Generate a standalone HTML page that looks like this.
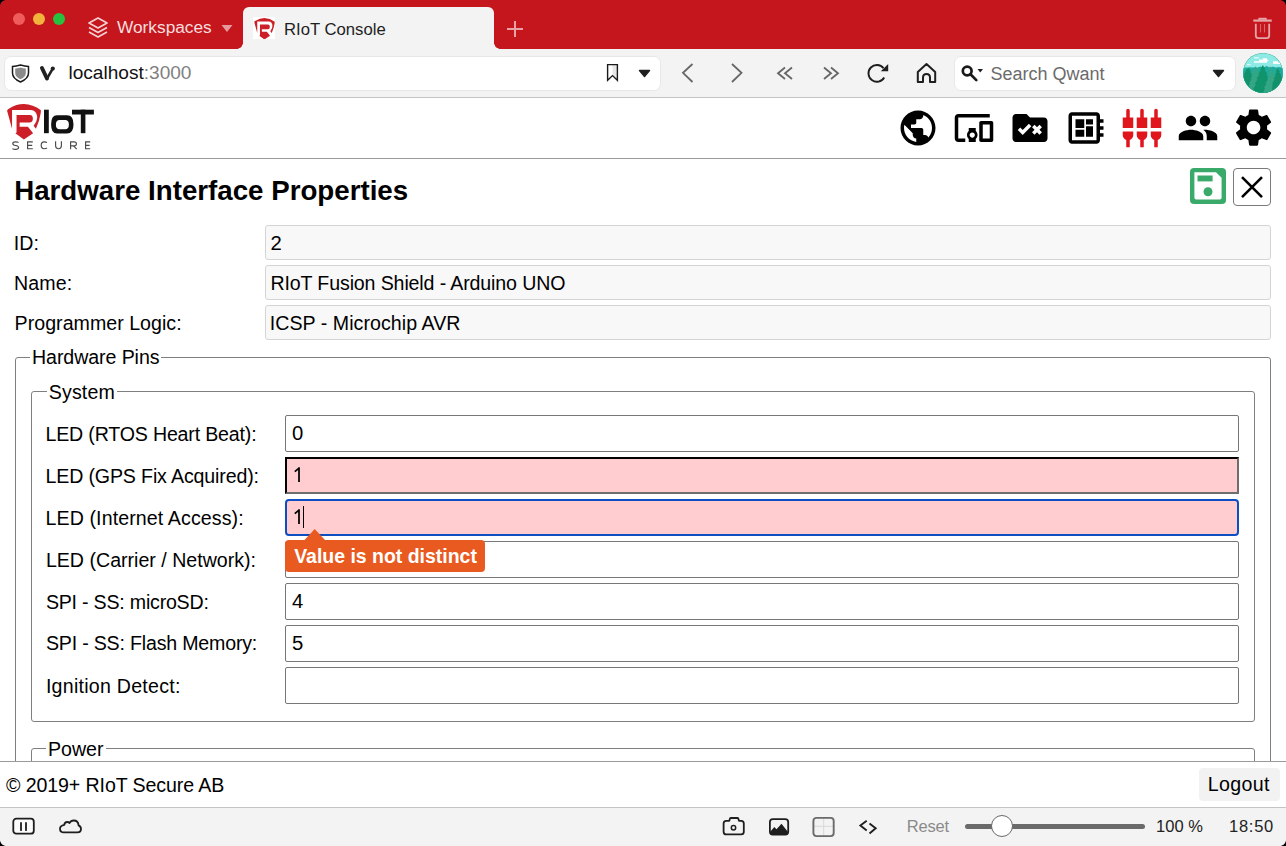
<!DOCTYPE html>
<html><head><meta charset="utf-8">
<style>
*{box-sizing:border-box}
html,body{margin:0;padding:0}
body{width:1286px;height:846px;overflow:hidden;position:relative;background:#fff;font-family:"Liberation Sans",sans-serif;color:#000}
.a{position:absolute}
#titlebar{left:0;top:0;width:1286px;height:49px;background:#c5161d}
#toolbar{left:0;top:49px;width:1286px;height:48px;background:#f3f3f3}
#tbline{left:0;top:97px;width:1286px;height:1px;background:#c4c4c4}
.dot{width:12px;height:12px;border-radius:50%}
#tab{left:243px;top:7px;width:251px;height:42px;background:#f3f3f3;border-radius:6px 6px 0 0}
.field{background:#fff;border-radius:7px;border:1px solid #e8e8e8}
#hdrline{left:0;top:158px;width:1286px;height:1px;background:#9a9a9a}
.lbl{font-size:19px;line-height:22px;white-space:nowrap}
.inp-ro{left:265px;width:1006px;height:35px;background:#f8f8f8;border:1px solid #d4d4d4;border-radius:3px}
.inp{left:285px;width:954px;height:37px;background:#fff;border:1px solid #777;border-radius:2px}
.val{font-size:19px;line-height:22px;white-space:nowrap}
.fs{border:1px solid #7f7f7f;border-radius:3px}
.legend{background:#fff;padding:0 2px;font-size:19px;line-height:22px;white-space:nowrap}
</style></head><body>

<!-- title bar -->
<div id="titlebar" class="a"></div>
<div class="a dot" style="left:13px;top:13px;background:#f05c5c"></div>
<div class="a dot" style="left:33px;top:13px;background:#f2b33d"></div>
<div class="a dot" style="left:53px;top:13px;background:#27c13f"></div>
<div id="tab" class="a"></div>

<!-- toolbar -->
<div id="toolbar" class="a"></div>
<div id="tbline" class="a"></div>
<div class="a field" style="left:3.5px;top:55.5px;width:657.5px;height:35px"></div>
<div class="a field" style="left:953.5px;top:55.5px;width:282px;height:35px"></div>
<div class="a" style="left:1243px;top:53px;width:40px;height:40px;border-radius:50%;background:#1f9a78"></div>

<!-- app header -->
<div id="hdrline" class="a"></div>

<!-- heading -->
<div class="a" style="left:1190px;top:168px;width:36px;height:36px;background:#3aaa6b;border-radius:4px"></div>
<div class="a" style="left:1233px;top:168px;width:38px;height:38px;border:1.5px solid #7a7a7a;border-radius:4px"></div>

<!-- ro fields -->
<div class="a inp-ro" style="top:225px"></div>
<div class="a inp-ro" style="top:265px"></div>
<div class="a inp-ro" style="top:305px"></div>

<!-- fieldsets -->
<div class="a fs" style="left:15px;top:357px;width:1256px;height:500px"></div>
<div class="a fs" style="left:31px;top:391px;width:1224px;height:331px"></div>
<div class="a fs" style="left:31px;top:748px;width:1224px;height:100px"></div>
<div class="a inp" style="top:415px;"></div>
<div class="a inp" style="top:457px;background:#ffcdd0;border-width:2px;border-style:solid;border-color:#000 #6e6e6e #6e6e6e #000;border-radius:0"></div>
<div class="a inp" style="top:499px;background:#ffcdd0;border:2px solid #0d4ec3;border-radius:4px"></div>
<div class="a inp" style="top:541px;"></div>
<div class="a inp" style="top:583px;"></div>
<div class="a inp" style="top:625px;"></div>
<div class="a inp" style="top:667px;"></div>
<div class="a" style="left:303px;top:506px;width:1px;height:22px;background:#000"></div>
<svg class="a" style="left:290px;top:462px" width="14" height="66" viewBox="0 0 14 66" fill="none" stroke="#000" stroke-width="1.75">
<path d="M9 5.3 V19.9 M9.3 5.8 L4.8 9.6" stroke-linecap="butt"/>
<path d="M9 47.3 V61.9 M9.3 47.8 L4.8 51.6" stroke-linecap="butt"/></svg>
<!-- tooltip -->
<div class="a" style="left:285px;top:539.5px;width:200px;height:32px;background:#e95a20;border-radius:4px"></div>
<svg class="a" style="left:304px;top:528px" width="22" height="13" viewBox="0 0 22 13"><path d="M0.5 12 L10.7 1 L21 12 Z" fill="#e95a20"/></svg>

<!-- footer -->
<div class="a" style="left:0;top:761px;width:1286px;height:46px;background:#fff;border-top:1px solid #9a9a9a"></div>
<div class="a" style="left:1199px;top:768px;width:81px;height:33px;background:#f2f2f2;border-radius:4px"></div>

<!-- status bar -->
<div class="a" style="left:0;top:807px;width:1286px;height:39px;background:#f3f3f3;border-top:1px solid #c4c4c4"></div>
<div class="a" style="left:965px;top:824px;width:180px;height:5px;background:#6a6a6a;border-radius:3px"></div>
<div class="a" style="left:991px;top:815px;width:22px;height:22px;background:#fff;border:1px solid #6a6a6a;border-radius:50%"></div>

<!-- ===== browser chrome icons ===== -->
<div class="a" style="left:0;top:0;width:6px;height:6px;background:radial-gradient(circle at 6px 6px, transparent 5.5px, #000 6.2px)"></div>
<div class="a" style="left:1280px;top:0;width:6px;height:6px;background:radial-gradient(circle at 0 6px, transparent 5.5px, #000 6.2px)"></div>
<div class="a" style="left:0;top:840px;width:6px;height:6px;background:radial-gradient(circle at 6px 0, transparent 5.5px, #000 6.2px)"></div>
<div class="a" style="left:1280px;top:840px;width:6px;height:6px;background:radial-gradient(circle at 0 0, transparent 5.5px, #000 6.2px)"></div>
<!-- workspaces layers -->
<svg class="a" style="left:86px;top:16px" width="24" height="24" viewBox="0 0 24 24" fill="none" stroke="#f3d0d1" stroke-width="1.7" stroke-linejoin="round">
<path d="M12 2 L21 7 L12 12 L3 7 Z"/><path d="M3 11.5 L12 16.5 L21 11.5"/><path d="M3 16 L12 21 L21 16"/></svg>
<svg class="a" style="left:221px;top:24px" width="12" height="9" viewBox="0 0 12 9"><path d="M0.5 1 L11.5 1 L6 8 Z" fill="#e79a9d"/></svg>
<!-- tab inverse corners -->
<div class="a" style="left:237px;top:43px;width:6px;height:6px;background:radial-gradient(circle at 0 0, #c5161d 5.5px, #f3f3f3 6px)"></div>
<div class="a" style="left:494px;top:43px;width:6px;height:6px;background:radial-gradient(circle at 6px 0, #c5161d 5.5px, #f3f3f3 6px)"></div>
<!-- favicon -->
<div class="a" style="left:253px;top:17px;width:22px;height:22px;background:#fff"></div>
<svg class="a" style="left:253.5px;top:17.5px" width="21" height="21.5" viewBox="55 65 715 750"><g fill="#cc1f27">
<path d="M160 590 L55 205 Q60 180 100 160 Q250 65 410 65 Q600 70 770 195 L765 260 Q740 420 665 590 L615 525 Q700 420 690 320 Q670 200 560 190 L160 190 Z"/>
<path d="M255 295 L540 295 Q600 300 600 375 Q600 450 530 455 L320 455 L320 545 L495 545 L605 685 L410 815 L230 685 L255 665 Z"/></g></svg>
<!-- plus -->
<svg class="a" style="left:506px;top:20px" width="18" height="18" viewBox="0 0 18 18" stroke="#e8a3a6" stroke-width="2"><path d="M9 1 V17 M1 9 H17"/></svg>
<!-- trash -->
<svg class="a" style="left:1252px;top:17px" width="21" height="23" viewBox="0 0 21 23" fill="none" stroke="#e6a5a8">
<path d="M1.3 3.6 H19.7" stroke-width="2.2"/><path d="M6.5 2.6 L7.3 1.6 H13.7 L14.5 2.6" stroke-width="1.6" fill="#e6a5a8"/><path d="M3.8 6.8 V18.6 Q3.8 21.2 6.4 21.2 H14.6 Q17.2 21.2 17.2 18.6 V6.8" stroke-width="1.8"/><path d="M8.5 7 V15.5 M12.5 7 V15.5" stroke-width="1.1" opacity="0.55"/></svg>

<!-- shield -->
<svg class="a" style="left:11px;top:64px" width="19" height="19" viewBox="0 0 19 19">
<path d="M9.5 1 Q5 2.2 1.5 2.5 V9 Q1.5 14.5 9.5 18 Q17.5 14.5 17.5 9 V2.5 Q14 2.2 9.5 1 Z" fill="#fff" stroke="#1a1a1a" stroke-width="1.5"/>
<path d="M9.5 3.5 Q6.5 4.3 4.2 4.6 V9 Q4.2 13 9.5 15.3 Q14.8 13 14.8 9 V4.6 Q12.5 4.3 9.5 3.5 Z" fill="#8a8a8a"/></svg>
<!-- vivaldi V -->
<svg class="a" style="left:39px;top:65px" width="17" height="17" viewBox="0 0 17 17">
<path d="M2.9 2.9 L8 13.6" fill="none" stroke="#222" stroke-width="3.8" stroke-linecap="round"/>
<path d="M8 13.6 L13.6 3.9" fill="none" stroke="#222" stroke-width="2.6" stroke-linecap="round"/>
<circle cx="13.8" cy="3.6" r="2.1" fill="#222"/></svg>
<!-- bookmark -->
<svg class="a" style="left:606px;top:63px" width="13" height="19" viewBox="0 0 13 19">
<path d="M6.5 1.5 H11.4 V16.5 L6.5 12 Z" fill="#e6e6e6"/>
<path d="M1.6 1.6 H11.4 V17.3 L6.5 12.6 L1.6 17.3 Z" fill="none" stroke="#1a1a1a" stroke-width="1.4" stroke-linejoin="miter"/></svg>
<svg class="a" style="left:638px;top:69px" width="13" height="9" viewBox="0 0 13 9"><path d="M1.5 1.5 L11.5 1.5 L6.5 7.6 Z" fill="#1e1e1e" stroke="#1e1e1e" stroke-width="1.4" stroke-linejoin="round"/></svg>
<!-- nav -->
<svg class="a" style="left:676px;top:58px" width="170" height="30" viewBox="0 0 170 30" fill="none" stroke="#666" stroke-width="1.8" stroke-linecap="butt">
<path d="M16.5 6 L7 14.8 L16.5 24"/>
<path d="M56 6 L65.5 14.8 L56 24"/>
<path d="M109 9.5 L102 15.2 L109 21 M116 9.5 L109 15.2 L116 21"/>
<path d="M148 9.5 L155 15.2 L148 21 M155 9.5 L162 15.2 L155 21"/></svg>
<!-- reload -->
<svg class="a" style="left:866px;top:62px" width="24" height="22" viewBox="0 0 24 22">
<path d="M17.5 6.2 A8.4 8.4 0 1 0 18.2 15.5" fill="none" stroke="#1e1e1e" stroke-width="1.9"/>
<path d="M14.8 9.3 L22.2 9.3 L22.2 2 Z" fill="#1e1e1e"/></svg>
<!-- home -->
<svg class="a" style="left:915px;top:62px" width="23" height="22" viewBox="0 0 23 22">
<path d="M2.8 20 V10 L11.5 2 L20.2 10 V20 H15 V15.5 Q15 12 11.5 12 Q8 12 8 15.5 V20 Z" fill="none" stroke="#1e1e1e" stroke-width="2" stroke-linejoin="round"/></svg>
<!-- search -->
<svg class="a" style="left:960px;top:62px" width="26" height="22" viewBox="0 0 26 22">
<circle cx="7.2" cy="9" r="4.4" fill="none" stroke="#1a1a1a" stroke-width="2.7"/>
<path d="M10.5 12.3 L16.3 18.1" stroke="#1a1a1a" stroke-width="2.7" stroke-linecap="round"/>
<path d="M17.5 7 L23 7 L20.25 10.5 Z" fill="#1e1e1e"/></svg>
<svg class="a" style="left:1212px;top:69px" width="13" height="9" viewBox="0 0 13 9"><path d="M1.5 1.5 L11.5 1.5 L6.5 7.6 Z" fill="#1e1e1e" stroke="#1e1e1e" stroke-width="1.4" stroke-linejoin="round"/></svg>
<!-- avatar -->
<svg class="a" style="left:1242.5px;top:53px" width="40" height="40" viewBox="0 0 40 40">
<defs><clipPath id="av"><circle cx="20" cy="20" r="19.8"/></clipPath></defs>
<g clip-path="url(#av)">
<rect width="40" height="40" fill="#8deae4"/>
<path d="M11 8.2 h5 v-1.6 h4 v-1.4 h4 v1.6 h1.3 v1.4 h-1.3 v1.5 h-13 Z" fill="#fff"/>
<path d="M11 4 h4.8 v1.4 h-4.8 Z" fill="#d8f8f6"/>
<path d="M30 8.3 h5 v1.3 h2 v1.4 h-7 Z" fill="#fff"/>
<path d="M4 11 h3.5 v1.3 h-3.5 Z" fill="#d8f8f6"/>
<rect y="14.5" width="40" height="26" fill="#1fb0a3"/>
<path d="M0 40 V17 L2 15.5 L4 16.5 L7 14 L9 16 L11 14.5 L14 15.5 L17 13.5 L20 14.5 L24 13 L27 15 L30 13.5 L33 15 L36 14 L40 15.5 V40 Z" fill="#1eab9e"/>
<path d="M5.3 14.8 L8 18.5 L7 18.7 L9.2 22 L8 22.2 L10.5 26 L9.3 26.2 L11.5 30 L11 40 L0 40 L0 24 L1.5 22 L0.5 21.8 L2.7 18.5 L2 18.3 Z" fill="#12916a"/>
<path d="M12.5 13.3 L15.2 17.5 L14.2 17.7 L16.8 21.5 L15.6 21.8 L18.3 26 L17 26.2 L19.8 30.5 L18.5 30.8 L21 35 L21 40 L4 40 L5.5 35 L4.5 34.8 L7 30.5 L6 30.3 L8.5 26.2 L7.6 26 L10 21.8 L9.2 21.5 L11 17.7 L10.2 17.5 Z" fill="#35a685"/>
<path d="M19.8 12 L22.5 16.5 L21.5 16.8 L24.5 21 L23.3 21.3 L26.2 26 L25 26.3 L28 31 L26.5 31.3 L29.5 36 L28.5 36.3 L30.5 40 L9 40 L11 36.3 L10 36 L13 31.3 L11.6 31 L14.6 26.3 L13.4 26 L16.3 21.3 L15.2 21 L18 16.8 L17.1 16.5 Z" fill="#10946b"/>
<path d="M27 13 L29.8 17.2 L28.8 17.5 L31.5 21.5 L30.4 21.8 L33 26 L31.8 26.3 L34.5 30.5 L33.3 30.8 L36 35 L36 40 L20 40 L22 35 L21 34.8 L23.5 30.5 L22.4 30.3 L25 26.2 L24 26 L26.4 21.8 L25.5 21.5 L27.5 17.5 L26.5 17.2 Z" fill="#35a685"/>
<path d="M34.5 15.1 L37 18.7 L36 19 L38.5 22.5 L37.5 22.8 L40 26.5 V40 L29 40 L29.5 30 L31.6 26.2 L30.6 26 L32.8 22.2 L31.8 22 L33.8 18.7 L32.8 18.5 Z" fill="#12916a"/>
</g></svg>

<!-- ===== app header ===== -->
<svg class="a" style="left:6.5px;top:104px" width="34" height="35.5" viewBox="55 65 715 750"><g fill="#cc1f27">
<path d="M160 590 L55 205 Q60 180 100 160 Q250 65 410 65 Q600 70 770 195 L765 260 Q740 420 665 590 L615 525 Q700 420 690 320 Q670 200 560 190 L160 190 Z"/>
<path d="M255 295 L540 295 Q600 300 600 375 Q600 450 530 455 L320 455 L320 545 L495 545 L605 685 L410 815 L230 685 L255 665 Z"/></g></svg>
<svg class="a" style="left:40px;top:104px" width="60" height="48" viewBox="0 0 60 48">
<g fill="#111">
<rect x="4" y="5.7" width="4.8" height="23.5"/>
<path fill-rule="evenodd" d="M17 11.3 H27 Q33.5 11.3 33.5 20.4 Q33.5 29.5 27 29.5 H17 Q11.1 29.5 11.1 20.4 Q11.1 11.3 17 11.3 Z M19.5 15.9 H25.2 Q28.9 15.9 28.9 20.4 Q28.9 25.2 25.2 25.2 H19.5 Q15.9 25.2 15.9 20.4 Q15.9 15.9 19.5 15.9 Z"/>
<rect x="32" y="5.7" width="21.9" height="4.8"/>
<rect x="40.8" y="5.7" width="4.6" height="23.5"/>
</g>
</svg>

<svg class="a" style="left:0px;top:103.6px" width="100" height="48" viewBox="-40 0 100 48"><g fill="none" stroke="#4a4a4a" stroke-width="1.15">
<path d="M-21.4 38.5 Q-22 37.8 -24.6 37.8 Q-27.2 37.8 -27.2 39.6 Q-27.2 41.2 -24.5 41.5 Q-21.4 41.9 -21.4 43.6 Q-21.4 45.4 -24.4 45.4 Q-26.6 45.4 -27.6 44.6"/>
<path d="M-7.2 37.9 H-12.4 V44.7 H-7.2 M-12.4 41.3 H-7.8"/>
<path d="M7 38.6 Q6 37.9 4.2 37.9 Q1.2 37.9 1.2 41.3 Q1.2 44.7 4.2 44.7 Q6 44.7 7 44"/>
<path d="M15.6 37.2 V41.8 Q15.6 44.7 18.6 44.7 Q21.4 44.7 21.4 41.8 V37.2"/>
<path d="M30.6 45.2 V37.9 H34.2 Q36.4 37.9 36.4 39.9 Q36.4 41.8 34.2 41.8 H30.6 M33.6 41.8 L36.7 45.2"/>
<path d="M50.2 37.9 H45.6 V44.7 H50.2 M45.6 41.3 H49.6"/>
</g></svg>
<!-- header icons (material, 42px) -->
<svg class="a" style="left:897px;top:107px" width="42" height="42" viewBox="0 0 24 24"><path fill="#000" d="M12 2C6.48 2 2 6.48 2 12s4.48 10 10 10 10-4.48 10-10S17.52 2 12 2zm-1 17.93c-3.95-.49-7-3.85-7-7.930 0-.62.08-1.21.21-1.79L9 15v1c0 1.1.9 2 2 2v1.93zm6.9-2.54c-.26-.81-1-1.39-1.9-1.39h-1v-3c0-.55-.45-1-1-1H8v-2h2c.55 0 1-.45 1-1V7h2c1.1 0 2-.9 2-2v-.41c2.930 1.19 5 4.06 5 7.41 0 2.08-.8 3.97-2.1 5.39z"/></svg>
<svg class="a" style="left:953px;top:107px" width="42" height="42" viewBox="0 0 24 24"><path fill="#000" d="M3 6h18V4H3c-1.1 0-2 .9-2 2v12c0 1.1.9 2 2 2h4v-2H3V6zm10 6H9v1.78c-.61.55-1 1.33-1 2.22s.39 1.67 1 2.22V20h4v-1.78c.61-.55 1-1.34 1-2.22s-.39-1.670-1-2.22V12zm-2 5.5c-.83 0-1.5-.67-1.5-1.5s.67-1.5 1.5-1.5 1.5.67 1.5 1.5-.67 1.5-1.5 1.5zM22 8h-6c-.5 0-1 .5-1 1v10c0 .5.5 1 1 1h6c.5 0 1-.5 1-1V9c0-.5-.5-1-1-1zm-1 10h-4v-8h4v8z"/></svg>
<svg class="a" style="left:1009px;top:107px" width="42" height="42" viewBox="0 0 24 24"><path fill="#000" d="M20 6h-8l-2-2H4c-1.1 0-1.99.9-1.99 2L2 18c0 1.1.9 2 2 2h16c1.1 0 2-.9 2-2V8c0-1.1-.9-2-2-2zM7.83 16L5 13.17l1.41-1.41 1.41 1.41 3.54-3.54 1.41 1.41L7.83 16zm9.58-3l1.41 1.41-1.41 1.41L16 14.41l-1.41 1.42-1.41-1.41L14.59 13l-1.41-1.41 1.41-1.41L16 11.590l1.41-1.41 1.41 1.41L17.41 13z"/></svg>
<svg class="a" style="left:1065px;top:107px" width="42" height="42" viewBox="0 0 24 24"><path fill="#000" d="M22 9V7h-2V5c0-1.1-.9-2-2-2H4c-1.1 0-2 .9-2 2v14c0 1.1.9 2 2 2h14c1.1 0 2-.9 2-2v-2h2v-2h-2v-2h2v-2h-2V9h2zm-4 10H4V5h14v14zM6 13h5v4H6zm6-6h4v3h-4zM6 7h5v5H6zm6 4h4v6h-4z"/></svg>
<svg class="a" style="left:1121px;top:107px" width="42" height="42" viewBox="0 0 24 24"><path fill="#e0161c" d="M5 2c0-.55-.45-1-1-1s-1 .45-1 1v4H1v6h6V6H5V2zm4 14c0 1.3.84 2.4 2 2.82V23h2v-4.18c1.16-.41 2-1.51 2-2.82v-2H9v2zm-8 0c0 1.3.84 2.4 2 2.82V23h2v-4.18C6.16 18.4 7 17.3 7 16v-2H1v2zM21 6V2c0-.55-.45-1-1-1s-1 .45-1 1v4h-2v6h6V6h-2zm-8-4c0-.55-.45-1-1-1s-1 .45-1 1v4H9v6h6V6h-2V2zm4 14c0 1.3.84 2.4 2 2.82V23h2v-4.18c1.16-.41 2-1.51 2-2.82v-2h-6v2z"/></svg>
<svg class="a" style="left:1177px;top:107px" width="42" height="42" viewBox="0 0 24 24"><path fill="#000" d="M16 11c1.66 0 2.99-1.34 2.99-3S17.66 5 16 5c-1.66 0-3 1.34-3 3s1.34 3 3 3zm-8 0c1.66 0 2.99-1.34 2.99-3S9.66 5 8 5C6.34 5 5 6.34 5 8s1.34 3 3 3zm0 2c-2.33 0-7 1.17-7 3.5V19h14v-2.5c0-2.33-4.67-3.5-7-3.5zm8 0c-.29 0-.62.02-.97.05 1.16.84 1.97 1.97 1.97 3.45V19h6v-2.5c0-2.33-4.67-3.5-7-3.5z"/></svg>
<svg class="a" style="left:1231.2px;top:105.2px" width="45.15" height="45.15" viewBox="0 0 24 24"><path fill="#000" d="M19.14 12.94c.04-.3.06-.61.06-.94 0-.32-.02-.64-.07-.94l2.03-1.58c.18-.14.23-.41.12-.61l-1.92-3.32c-.12-.22-.37-.29-.59-.22l-2.39.96c-.5-.38-1.03-.7-1.62-.94l-.36-2.54c-.04-.24-.24-.41-.48-.41h-3.84c-.24 0-.43.17-.47.41l-.36 2.54c-.59.24-1.13.57-1.62.94l-2.39-.96c-.22-.08-.47 0-.59.22L2.74 8.87c-.12.21-.08.47.12.61l2.03 1.58c-.05.3-.09.63-.09.94s.02.64.07.94l-2.03 1.58c-.18.14-.23.41-.12.61l1.92 3.32c.12.22.37.29.59.22l2.39-.96c.5.38 1.03.7 1.62.94l.36 2.54c.05.24.24.41.48.41h3.84c.24 0 .44-.17.47-.41l.36-2.54c.59-.24 1.13-.56 1.62-.94l2.39.96c.22.08.47 0 .59-.22l1.92-3.32c.12-.22.07-.47-.12-.61l-2.01-1.58zM12 15.6c-1.98 0-3.6-1.62-3.6-3.6s1.62-3.6 3.6-3.6 3.6 1.62 3.6 3.6-1.62 3.6-3.6 3.6z"/></svg>

<!-- save / close -->
<svg class="a" style="left:1190px;top:168px" width="36" height="36" viewBox="0 0 36 36">
<path d="M4.4 4.2 H26 L31.6 9.8 V29.6 Q31.6 31.6 29.6 31.6 H6.4 Q4.4 31.6 4.4 29.6 Z" fill="#fff"/>
<rect x="7.5" y="7.5" width="15.1" height="5.9" fill="#3aaa6b"/>
<circle cx="18" cy="23.7" r="4.5" fill="#3aaa6b"/></svg>
<svg class="a" style="left:1233px;top:168px" width="38" height="38" viewBox="0 0 38 38">
<path d="M9 9.2 L29 29.2 M29 9.2 L9 29.2" stroke="#000" stroke-width="2.6"/></svg>

<!-- status bar icons -->
<svg class="a" style="left:11px;top:816px" width="26" height="20" viewBox="0 0 26 20" fill="none" stroke="#1e1e1e">
<rect x="2.3" y="2.7" width="20.5" height="15" rx="3" stroke-width="1.8" fill="#fcfcfc"/>
<path d="M10 7 V14.2 M15 7 V14.2" stroke-width="1.8" stroke-linecap="round"/></svg>
<svg class="a" style="left:58px;top:818px" width="25" height="17" viewBox="0 0 25 17">
<path d="M5 14.3 H19.5 Q23 14.3 23 11 Q23 8.5 20.6 7.4 Q20.2 2.5 15.8 2.5 Q12.8 2.5 11.4 5 Q10.5 4 9.2 4 Q6.6 4 6.3 6.8 Q2 7.6 2 10.6 Q2 14.3 5 14.3 Z" fill="none" stroke="#1e1e1e" stroke-width="1.8" stroke-linejoin="round"/></svg>
<svg class="a" style="left:721px;top:815px" width="26" height="22" viewBox="0 0 26 22" fill="none" stroke="#1e1e1e" stroke-width="1.8">
<path d="M5.2 5.8 H8.3 L9 3.6 Q9.2 3 10 3 H16.3 Q17.1 3 17.3 3.6 L18 5.8 H20.2 Q22.8 5.8 22.8 8.4 V16.8 Q22.8 19.4 20.2 19.4 H5.2 Q2.6 19.4 2.6 16.8 V8.4 Q2.6 5.8 5.2 5.8 Z" stroke-linejoin="round"/>
<circle cx="12.5" cy="12.7" r="2.2" stroke-width="1.5"/></svg>
<svg class="a" style="left:767px;top:816px" width="24" height="21" viewBox="0 0 24 21">
<rect x="2.9" y="3.1" width="18.3" height="15.5" rx="3" fill="none" stroke="#1e1e1e" stroke-width="1.8"/>
<path d="M3 16 L7.3 11 L9.5 13.2 L14.5 7.8 L21 16 V17 Q21 18.6 19.4 18.6 H4.6 Q3 18.6 3 17 Z" fill="#1e1e1e"/></svg>
<svg class="a" style="left:811px;top:815px" width="25" height="23" viewBox="0 0 25 23">
<path d="M12.7 3 V21 M2.5 11.3 H22.6" stroke="#d8d8d8" stroke-width="1"/>
<rect x="2.4" y="2.9" width="20.3" height="18.2" rx="3" fill="none" stroke="#6a6a6a" stroke-width="1.9"/></svg>
<svg class="a" style="left:857px;top:818px" width="22" height="18" viewBox="0 0 22 18" fill="none" stroke="#1e1e1e" stroke-width="1.9">
<path d="M9.7 2.7 L3.4 7.4 L9.7 12.4 M12.5 5.5 L18.7 10.3 L12.5 15.5"/></svg>

<div class="a" id="ws" style="left:117.00px;top:16.80px;font-size:17.30px;line-height:20px;font-weight:normal;color:#f6dede;white-space:nowrap">Workspaces</div>
<div class="a" id="tabtxt" style="left:284.00px;top:20.00px;font-size:16.71px;line-height:20px;font-weight:normal;color:#1e1e1e;white-space:nowrap">RIoT Console</div>
<div class="a" id="url" style="left:68.50px;top:62.00px;font-size:19.07px;line-height:22px;font-weight:normal;color:#111;white-space:nowrap">localhost<span style="color:#808080">:3000</span></div>
<div class="a" id="search" style="left:990.40px;top:63.00px;font-size:18.00px;line-height:22px;font-weight:normal;color:#6b6b6b;white-space:nowrap">Search Qwant</div>
<div class="a" id="h1" style="left:14.20px;top:175.00px;font-size:27.70px;line-height:32px;font-weight:bold;color:#000;white-space:nowrap">Hardware Interface Properties</div>
<div class="a" id="l_id" style="left:13.80px;top:231.90px;font-size:19.60px;line-height:22px;font-weight:normal;color:#000;white-space:nowrap;letter-spacing:0.100px">ID:</div>
<div class="a" id="l_name" style="left:14.00px;top:271.90px;font-size:19.60px;line-height:22px;font-weight:normal;color:#000;white-space:nowrap;letter-spacing:0.150px">Name:</div>
<div class="a" id="l_prog" style="left:14.60px;top:311.50px;font-size:19.60px;line-height:22px;font-weight:normal;color:#000;white-space:nowrap;letter-spacing:0.024px">Programmer Logic:</div>
<div class="a" id="v_id" style="left:270.50px;top:232.30px;font-size:20.30px;line-height:22px;font-weight:normal;color:#000;white-space:nowrap">2</div>
<div class="a" id="v_name" style="left:270.50px;top:272.40px;font-size:19.60px;line-height:22px;font-weight:normal;color:#000;white-space:nowrap;letter-spacing:-0.135px">RIoT Fusion Shield - Arduino UNO</div>
<div class="a" id="v_prog" style="left:269.70px;top:312.40px;font-size:19.60px;line-height:22px;font-weight:normal;color:#000;white-space:nowrap;letter-spacing:0.052px">ICSP - Microchip AVR</div>
<div class="a" id="lg_hw" style="left:30.00px;top:346.20px;font-size:19.60px;line-height:22px;font-weight:normal;color:#000;white-space:nowrap;letter-spacing:-0.083px;background:#fff;padding:0 2px">Hardware Pins</div>
<div class="a" id="lg_sys" style="left:46.80px;top:381.00px;font-size:19.60px;line-height:22px;font-weight:normal;color:#000;white-space:nowrap;letter-spacing:0.120px;background:#fff;padding:0 2px">System</div>
<div class="a" id="lg_pow" style="left:46.00px;top:738.10px;font-size:19.60px;line-height:22px;font-weight:normal;color:#000;white-space:nowrap;background:#fff;padding:0 2px">Power</div>
<div class="a" id="r0" style="left:45.50px;top:422.90px;font-size:19.60px;line-height:22px;font-weight:normal;color:#000;white-space:nowrap;letter-spacing:-0.181px">LED (RTOS Heart Beat):</div>
<div class="a" id="r1" style="left:45.50px;top:464.90px;font-size:19.60px;line-height:22px;font-weight:normal;color:#000;white-space:nowrap;letter-spacing:-0.146px">LED (GPS Fix Acquired):</div>
<div class="a" id="r2" style="left:45.50px;top:506.90px;font-size:19.60px;line-height:22px;font-weight:normal;color:#000;white-space:nowrap;letter-spacing:0.104px">LED (Internet Access):</div>
<div class="a" id="r3" style="left:45.90px;top:548.70px;font-size:19.60px;line-height:22px;font-weight:normal;color:#000;white-space:nowrap">LED (Carrier / Network):</div>
<div class="a" id="r4" style="left:45.90px;top:590.70px;font-size:19.60px;line-height:22px;font-weight:normal;color:#000;white-space:nowrap;letter-spacing:-0.212px">SPI - SS: microSD:</div>
<div class="a" id="r5" style="left:45.90px;top:632.10px;font-size:19.60px;line-height:22px;font-weight:normal;color:#000;white-space:nowrap;letter-spacing:-0.191px">SPI - SS: Flash Memory:</div>
<div class="a" id="r6" style="left:45.90px;top:674.50px;font-size:19.60px;line-height:22px;font-weight:normal;color:#000;white-space:nowrap;letter-spacing:0.253px">Ignition Detect:</div>
<div class="a" id="v0" style="left:292.00px;top:422.20px;font-size:20.30px;line-height:22px;font-weight:normal;color:#000;white-space:nowrap">0</div>
<div class="a" id="v4" style="left:292.00px;top:589.70px;font-size:20.30px;line-height:22px;font-weight:normal;color:#000;white-space:nowrap">4</div>
<div class="a" id="v5" style="left:292.00px;top:631.70px;font-size:20.30px;line-height:22px;font-weight:normal;color:#000;white-space:nowrap">5</div>
<div class="a" id="tip" style="left:294.20px;top:545.30px;font-size:19.47px;line-height:22px;font-weight:bold;color:#fff;white-space:nowrap">Value is not distinct</div>
<div class="a" id="copy" style="left:6.00px;top:774.40px;font-size:19.60px;line-height:22px;font-weight:normal;color:#000;white-space:nowrap;letter-spacing:-0.105px">&copy; 2019+ RIoT Secure AB</div>
<div class="a" id="logout" style="left:1207.80px;top:773.40px;font-size:19.60px;line-height:22px;font-weight:normal;color:#000;white-space:nowrap;letter-spacing:0.320px">Logout</div>
<div class="a" id="reset" style="left:906.70px;top:815.60px;font-size:16.50px;line-height:20px;font-weight:normal;color:#8a8a8a;white-space:nowrap;letter-spacing:-0.200px">Reset</div>
<div class="a" id="zoom" style="left:1156.10px;top:815.80px;font-size:16.50px;line-height:20px;font-weight:normal;color:#222;white-space:nowrap">100 %</div>
<div class="a" id="clock" style="left:1229.10px;top:815.80px;font-size:16.50px;line-height:20px;font-weight:normal;color:#222;white-space:nowrap;letter-spacing:0.700px">18:50</div>
</body></html>
